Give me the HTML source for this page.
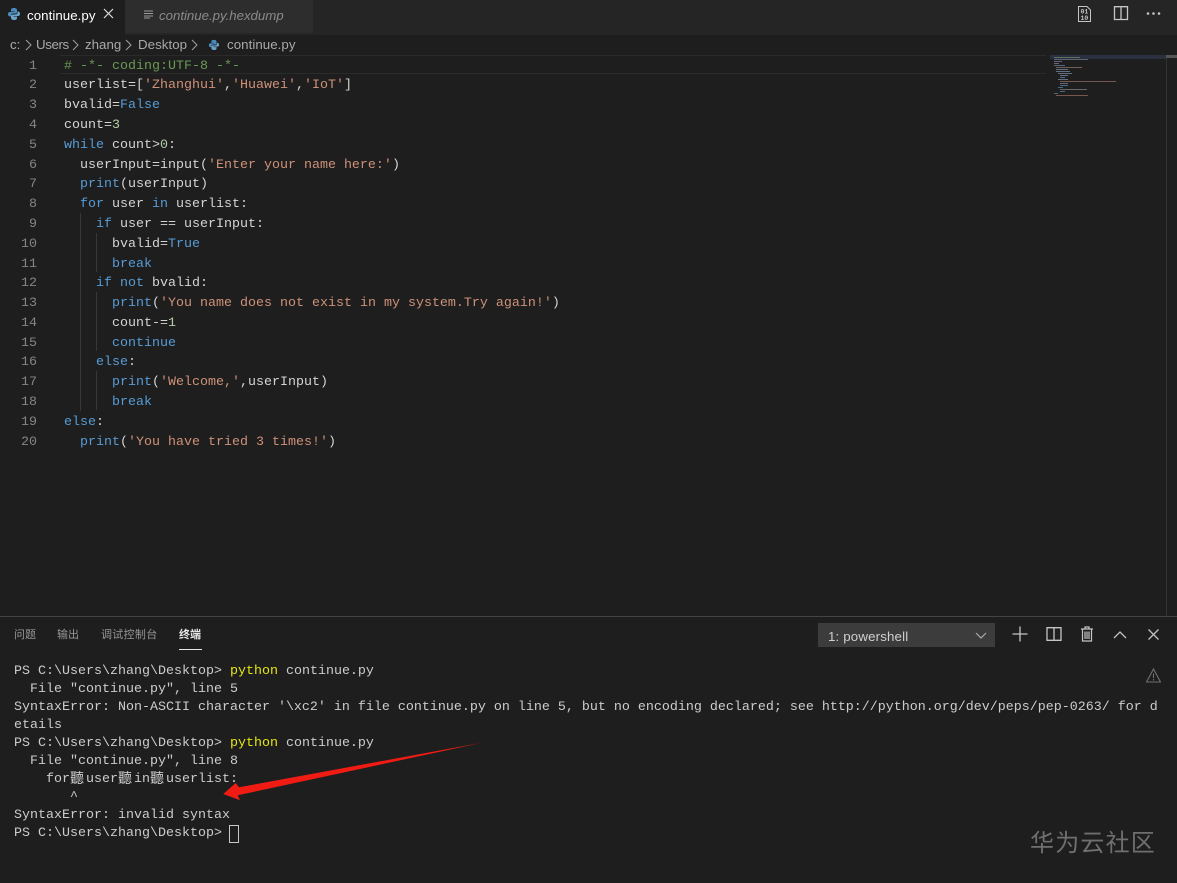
<!DOCTYPE html>
<html><head><meta charset="utf-8"><style>
html,body{margin:0;padding:0;background:#1e1e1e}
#r{position:relative;width:1177px;height:883px;overflow:hidden;background:#1e1e1e;font-family:"Liberation Sans","Noto Sans CJK SC",sans-serif;color:#ccc}
.a{position:absolute}
.w{position:absolute;left:0;top:2px;width:1177px;height:0}
.c,.t,.n{position:absolute;font-family:"Liberation Mono","Noto Sans CJK SC",monospace;font-size:13.33px;white-space:pre;line-height:18px}
.c{left:64px;color:#d4d4d4}
.n{width:37px;text-align:right;left:0;color:#858585}
.t{left:14px;color:#ccc}
.k{color:#569cd6}.s{color:#ce9178}.g{color:#6a9955}.d{color:#b5cea8}.y{color:#e5e510}
.ig{position:absolute;width:1px;background:#383838}
</style></head><body><div id="r">
<div class="a" style="left:0;top:0;width:1177px;height:35px;background:#252526"></div>
<div class="a" style="left:0;top:0;width:125px;height:35px;background:#1e1e1e"></div>
<div class="a" style="left:125px;top:0;width:188px;height:33px;background:#2d2d2d"></div>
<svg class="a" style="left:7px;top:7px" width="14" height="14" viewBox="0 0 14 14"><path d="M7 1C4.500 1 4 2 4 3V4.500H7.500V5H3C1.500 5 1 6 1 7.300S1.700 9.500 3 9.500H4V8C4 7 5 6.500 6 6.500H8.500C9.500 6.500 10 6 10 5V3C10 2 9 1 7 1Z" fill="#4b8bbe"/><path d="M7 13C9.500 13 10 12 10 11V9.500H6.500V9H11C12.500 9 13 8 13 6.700S12.300 4.500 11 4.500H10.500V6C10.500 7 9 7.500 8 7.500H5.500C4.500 7.500 4 8 4 9V11C4 12 5 13 7 13Z" fill="#6ba4c9"/></svg>
<div class="a" style="left:27px;top:7px;font-size:13.3px;line-height:18px;color:#fff;letter-spacing:.05px">continue.py</div>
<svg class="a" style="left:103px;top:8px" width="11" height="11" viewBox="0 0 11 11"><path d="M1 1L10 10M10 1L1 10" stroke="#ddd" stroke-width="1.200" fill="none"/></svg>
<svg class="a" style="left:144px;top:10px" width="10" height="9" viewBox="0 0 10 9"><path d="M0 1H9M0 3.500H9M0 6H9M0 8H6" stroke="#999" stroke-width="1" fill="none"/></svg>
<div class="a" style="left:159px;top:7px;font-size:13.3px;line-height:18px;color:#8a8a8a;font-style:italic;letter-spacing:-.04px">continue.py.hexdump</div>
<svg class="a" style="left:1078px;top:6px" width="13" height="16" viewBox="0 0 13 16"><path d="M.5 .5H9L12.500 4V15.500H.5Z" fill="none" stroke="#c5c5c5"/><text x="2.500" y="7.500" font-family="Liberation Mono" font-size="6.500" fill="#c5c5c5" font-weight="bold">01</text><text x="2.500" y="14" font-family="Liberation Mono" font-size="6.500" fill="#c5c5c5" font-weight="bold">10</text></svg>
<svg class="a" style="left:1113px;top:6px" width="16" height="15" viewBox="0 0 16 15"><path d="M1.500 .7H14.500V13.500H1.500ZM8 .7V13.500" fill="none" stroke="#c5c5c5" stroke-width="1.300"/></svg>
<svg class="a" style="left:1146px;top:11px" width="15" height="5" viewBox="0 0 15 5"><circle cx="2" cy="2.500" r="1.300" fill="#c5c5c5"/><circle cx="7.500" cy="2.500" r="1.300" fill="#c5c5c5"/><circle cx="13" cy="2.500" r="1.300" fill="#c5c5c5"/></svg>

<div class="a" style="left:10px;top:36px;font-size:13.3px;line-height:18px;color:#a9a9a9;white-space:pre">c:</div>
<div class="a" style="left:36px;top:36px;font-size:13.3px;line-height:18px;color:#a9a9a9;letter-spacing:-.4px">Users</div>
<div class="a" style="left:85px;top:36px;font-size:13.3px;line-height:18px;color:#a9a9a9">zhang</div>
<div class="a" style="left:138px;top:36px;font-size:13.3px;line-height:18px;color:#a9a9a9;letter-spacing:.05px">Desktop</div>
<div class="a" style="left:227px;top:36px;font-size:13.3px;line-height:18px;color:#a9a9a9;letter-spacing:.05px">continue.py</div>
<svg class="a" style="left:0;top:38px" width="225" height="14" viewBox="0 0 225 14"><path d="M26 2L31 7L26 12M73 2L78 7L73 12M126 2L131 7L126 12M192 2L197 7L192 12" stroke="#a0a0a0" fill="none"/><g transform="translate(208 1) scale(.85)"><path d="M7 1C4.500 1 4 2 4 3V4.500H7.500V5H3C1.500 5 1 6 1 7.300S1.700 9.500 3 9.500H4V8C4 7 5 6.500 6 6.500H8.500C9.500 6.500 10 6 10 5V3C10 2 9 1 7 1Z" fill="#4b8bbe"/><path d="M7 13C9.500 13 10 12 10 11V9.500H6.500V9H11C12.500 9 13 8 13 6.700S12.300 4.500 11 4.500H10.500V6C10.500 7 9 7.500 8 7.500H5.500C4.500 7.500 4 8 4 9V11C4 12 5 13 7 13Z" fill="#6ba4c9"/></g></svg>

<div class="a" style="left:60px;top:55px;width:986px;height:19px;border-top:1px solid #2a2a2a;border-bottom:1px solid #2a2a2a;box-sizing:border-box"></div>

<div class="ig" style="left:80px;top:213px;height:198px"></div>
<div class="ig" style="left:96px;top:233px;height:39px"></div>
<div class="ig" style="left:96px;top:292px;height:59px"></div>
<div class="ig" style="left:96px;top:371px;height:39px"></div>

<div class="w">
<div class="n" style="top:56px">1</div><div class="c" style="top:56px;color:#6a9955"># -*- coding:UTF-8 -*-</div>
<div class="n" style="top:75px">2</div><div class="c" style="top:75px">userlist=[<span class="s">'Zhanghui'</span>,<span class="s">'Huawei'</span>,<span class="s">'IoT'</span>]</div>
<div class="n" style="top:95px">3</div><div class="c" style="top:95px">bvalid=<span class="k">False</span></div>
<div class="n" style="top:115px">4</div><div class="c" style="top:115px">count=<span class="d">3</span></div>
<div class="n" style="top:135px">5</div><div class="c" style="top:135px"><span class="k">while</span> count&gt;<span class="d">0</span>:</div>
<div class="n" style="top:155px">6</div><div class="c" style="top:155px">  userInput=input(<span class="s">'Enter your name here:'</span>)</div>
<div class="n" style="top:174px">7</div><div class="c" style="top:174px">  <span class="k">print</span>(userInput)</div>
<div class="n" style="top:194px">8</div><div class="c" style="top:194px">  <span class="k">for</span> user <span class="k">in</span> userlist:</div>
<div class="n" style="top:214px">9</div><div class="c" style="top:214px">    <span class="k">if</span> user == userInput:</div>
<div class="n" style="top:234px">10</div><div class="c" style="top:234px">      bvalid=<span class="k">True</span></div>
<div class="n" style="top:254px">11</div><div class="c" style="top:254px">      <span class="k">break</span></div>
<div class="n" style="top:273px">12</div><div class="c" style="top:273px">    <span class="k">if</span> <span class="k">not</span> bvalid:</div>
<div class="n" style="top:293px">13</div><div class="c" style="top:293px">      <span class="k">print</span>(<span class="s">'You name does not exist in my system.Try again!'</span>)</div>
<div class="n" style="top:313px">14</div><div class="c" style="top:313px">      count-=<span class="d">1</span></div>
<div class="n" style="top:333px">15</div><div class="c" style="top:333px">      <span class="k">continue</span></div>
<div class="n" style="top:352px">16</div><div class="c" style="top:352px">    <span class="k">else</span>:</div>
<div class="n" style="top:372px">17</div><div class="c" style="top:372px">      <span class="k">print</span>(<span class="s">'Welcome,'</span>,userInput)</div>
<div class="n" style="top:392px">18</div><div class="c" style="top:392px">      <span class="k">break</span></div>
<div class="n" style="top:412px">19</div><div class="c" style="top:412px"><span class="k">else</span>:</div>
<div class="n" style="top:432px">20</div><div class="c" style="top:432px">  <span class="k">print</span>(<span class="s">'You have tried 3 times!'</span>)</div>
</div>

<svg class="a" style="left:1050px;top:55px" width="127" height="45" viewBox="0 0 127 45"><rect x="0" y="0" width="116" height="4" fill="#2a3040"/><rect x="116" y="0" width="11" height="3" fill="#555"/><g stroke-width="1" fill="none"><path d="M4 2.500H30" stroke="#5c7060"/><path d="M4 4.500H38" stroke="#5a6470"/><path d="M4 6.500H12" stroke="#667"/><path d="M4 8.500H9" stroke="#667"/><path d="M4 10.500H15" stroke="#556a80"/><path d="M6 12.500H32" stroke="#70605a"/><path d="M6 14.500H18" stroke="#607080"/><path d="M6 16.500H20" stroke="#607080"/><path d="M8 18.500H22" stroke="#607080"/><path d="M10 20.500H18" stroke="#607080"/><path d="M10 22.500H15" stroke="#4a6a8a"/><path d="M8 24.500H18" stroke="#607080"/><path d="M10 26.500H66" stroke="#74584f"/><path d="M10 28.500H18" stroke="#667"/><path d="M10 30.500H18" stroke="#4a6a8a"/><path d="M8 32.500H13" stroke="#4a6a8a"/><path d="M10 34.500H37" stroke="#666"/><path d="M10 36.500H15" stroke="#4a6a8a"/><path d="M4 38.500H8" stroke="#4a6a8a"/><path d="M6 40.500H38" stroke="#74584f"/></g></svg>
<div class="a" style="left:1166px;top:58px;width:1px;height:558px;background:#333"></div>

<div class="a" style="left:0;top:616px;width:1177px;height:1px;background:#444"></div>
<div class="a" style="left:14px;top:627px;font-size:11px;line-height:16px;color:#969696">问题</div>
<div class="a" style="left:57px;top:627px;font-size:11px;line-height:16px;color:#969696">输出</div>
<div class="a" style="left:101px;top:627px;font-size:11px;line-height:16px;color:#969696;letter-spacing:.3px">调试控制台</div>
<div class="a" style="left:179px;top:627px;font-size:11px;line-height:16px;color:#e7e7e7;font-weight:bold">终端</div>
<div class="a" style="left:179px;top:649px;width:23px;height:1px;background:#e7e7e7"></div>

<div class="a" style="left:818px;top:623px;width:177px;height:24px;background:#3c3c3c"></div>
<div class="a" style="left:828px;top:628px;font-size:13.3px;line-height:18px;color:#d0d0d0;letter-spacing:.15px">1: powershell</div>
<svg class="a" style="left:975px;top:632px" width="12" height="8" viewBox="0 0 12 8"><path d="M1 1L6 6L11 1" stroke="#aaa" stroke-width="1.200" fill="none"/></svg>
<svg class="a" style="left:1012px;top:626px" width="16" height="16" viewBox="0 0 16 16"><path d="M.5 8H15.500M8 .5V15.500" stroke="#c5c5c5" stroke-width="1.300"/></svg>
<svg class="a" style="left:1046px;top:627px" width="16" height="14" viewBox="0 0 16 14"><path d="M1 .7H15V13.300H1ZM8 .7V13.300" fill="none" stroke="#c5c5c5" stroke-width="1.300"/></svg>
<svg class="a" style="left:1080px;top:626px" width="14" height="16" viewBox="0 0 14 16"><path d="M1 3H13M5 3V1H9V3M2.500 3V15H11.500V3M5 5.500V13M7 5.500V13M9 5.500V13" fill="none" stroke="#c5c5c5" stroke-width="1.200"/></svg>
<svg class="a" style="left:1113px;top:630px" width="14" height="9" viewBox="0 0 14 9"><path d="M1 8L7 2L13 8" fill="none" stroke="#c5c5c5" stroke-width="1.300"/></svg>
<svg class="a" style="left:1148px;top:629px" width="11" height="11" viewBox="0 0 11 11"><path d="M.5 .5L10.500 10.500M10.500 .5L.5 10.500" fill="none" stroke="#c5c5c5" stroke-width="1.300"/></svg>
<svg class="a" style="left:1146px;top:668px" width="15" height="15" viewBox="0 0 15 15"><path d="M7.500 1L14.500 14H.5ZM7.500 5.500V10M7.500 11V12.500" fill="none" stroke="#6f6f6f" stroke-width="1.100"/></svg>

<div class="w">
<div class="t" style="top:661px">PS C:\Users\zhang\Desktop&gt; <span class="y">python</span> continue.py</div>
<div class="t" style="top:679px">  File "continue.py", line 5</div>
<div class="t" style="top:697px">SyntaxError: Non-ASCII character '\xc2' in file continue.py on line 5, but no encoding declared; see http://python.org/dev/peps/pep-0263/ for d</div>
<div class="t" style="top:715px">etails</div>
<div class="t" style="top:733px">PS C:\Users\zhang\Desktop&gt; <span class="y">python</span> continue.py</div>
<div class="t" style="top:751px">  File "continue.py", line 8</div>
<div class="t" style="top:769px">    for</div><div class="t" style="top:769px;left:70px;font-size:14px">聽</div><div class="t" style="top:769px;left:86px">user</div><div class="t" style="top:769px;left:118px;font-size:14px">聽</div><div class="t" style="top:769px;left:134px">in</div><div class="t" style="top:769px;left:150px;font-size:14px">聽</div><div class="t" style="top:769px;left:166px">userlist:</div>
<div class="t" style="top:787px">       ^</div>
<div class="t" style="top:805px">SyntaxError: invalid syntax</div>
<div class="t" style="top:823px">PS C:\Users\zhang\Desktop&gt;</div>
</div>
<div class="a" style="left:229px;top:825px;width:8px;height:16px;border:1px solid #c8c8c8"></div>

<svg class="a" style="left:220px;top:738px" width="265" height="66" viewBox="0 0 265 66"><path d="M261.700 4.700L19 49.300L15.700 45L3.300 56L20 62.300L17.700 57.300Z" fill="#f01c14"/></svg>

<div class="a" style="left:1030px;top:829px;font-size:24px;line-height:30px;color:#6f6f6f;letter-spacing:1.2px;white-space:nowrap">华为云社区</div>
</div></body></html>
